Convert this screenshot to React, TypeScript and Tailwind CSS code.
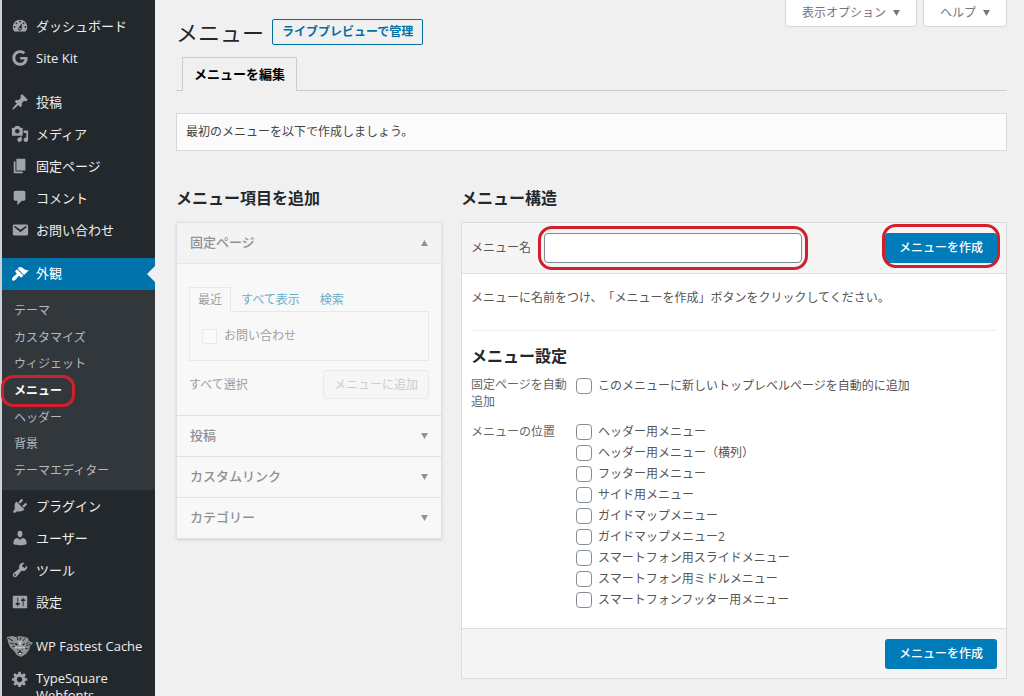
import type { ReactNode } from 'react';
import { FaGoogle } from 'react-icons/fa';

const paths = {
  dashboard:
    'M3.76 16h12.48c1.1-1.37 1.76-3.11 1.76-5 0-4.42-3.58-8-8-8s-8 3.58-8 8c0 1.89.66 3.63 1.76 5zM10 4c.55 0 1 .45 1 1s-.45 1-1 1-1-.45-1-1 .45-1 1-1zM6 6c.55 0 1 .45 1 1s-.45 1-1 1-1-.45-1-1 .45-1 1-1zm8 0c.55 0 1 .45 1 1s-.45 1-1 1-1-.45-1-1 .45-1 1-1zm-5.37 5.55L12 7v6c0 1.1-.9 2-2 2s-2-.9-2-2c0-.57.24-1.08.63-1.45zM4 10c.55 0 1 .45 1 1s-.45 1-1 1-1-.45-1-1 .45-1 1-1zm12 0c.55 0 1 .45 1 1s-.45 1-1 1-1-.45-1-1 .45-1 1-1zm-5 3c0-.55-.45-1-1-1s-1 .45-1 1 .45 1 1 1 1-.45 1-1z',
  post: 'M10.44 3.02l1.82-1.82 6.36 6.35-1.83 1.82c-1.05-.68-2.48-.57-3.41.36l-.75.75c-.92.93-1.04 2.35-.35 3.41l-1.83 1.82-2.41-2.41-2.8 2.79c-.42.42-3.38 2.71-3.8 2.29s1.86-3.39 2.28-3.81l2.79-2.79L4.1 9.36l1.83-1.82c1.05.69 2.48.57 3.4-.36l.75-.75c.93-.92 1.05-2.35.36-3.41z',
  media:
    'M13 11V4c0-.55-.45-1-1-1h-1.67L9 1H5L3.67 3H2c-.55 0-1 .45-1 1v7c0 .55.45 1 1 1h10c.55 0 1-.45 1-1zM7 4.5c1.38 0 2.5 1.12 2.5 2.5S8.38 9.5 7 9.5 4.5 8.38 4.5 7 5.62 4.5 7 4.5zM14 6h5v10.5c0 1.38-1.12 2.5-2.5 2.5S14 17.88 14 16.5s1.12-2.5 2.5-2.5c.17 0 .34.02.5.05V9h-3V6zm-4 8.05V13h2v3.5c0 1.38-1.12 2.5-2.5 2.5S7 17.88 7 16.5 8.12 14 9.5 14c.17 0 .34.02.5.05z',
  page: 'M6 15V2h10v13H6zm-1 1h8v2H3V5h2v11z',
  comments:
    'M5 2h9c1.1 0 2 .9 2 2v7c0 1.1-.9 2-2 2h-2l-5 5v-5H5c-1.1 0-2-.9-2-2V4c0-1.1.9-2 2-2z',
  email:
    'M3.87 4h13.25C18.37 4 19 4.59 19 5.79v8.42c0 1.19-.63 1.79-1.88 1.79H3.87c-1.25 0-1.88-.6-1.88-1.79V5.79c0-1.2.63-1.79 1.88-1.79zm6.62 8.6l6.74-5.53c.24-.2.43-.66.13-1.07-.29-.41-.82-.42-1.17-.17l-5.7 3.86L4.8 5.83c-.35-.25-.88-.24-1.17.17-.3.41-.11.87.13 1.07z',
  appearance:
    'M14.48 11.06L7.41 3.99l1.5-1.5c.5-.56 2.3-.47 3.51.32 1.21.8 1.43 1.28 2.91 2.1 1.18.64 2.45 1.26 4.45.85zm-.71.71L6.7 4.7 4.93 6.47c-.39.39-.39 1.02 0 1.41l1.06 1.06c.39.39.39 1.03 0 1.42-.6.6-1.43 1.11-2.21 1.69-.35.26-.7.53-1.01.84C1.43 14.23.4 16.08 1.4 17.07c.99 1 2.84-.03 4.18-1.36.31-.31.58-.66.85-1.02.57-.78 1.08-1.61 1.69-2.21.39-.39 1.02-.39 1.41 0l1.06 1.06c.39.39 1.02.39 1.41 0z',
  plugins:
    'M13.11 4.36L9.87 7.6 8 5.73l3.24-3.24c.35-.34 1.05-.2 1.56.32.52.51.66 1.21.31 1.55zm-8 1.77l.91-1.12 9.01 9.01-1.19.84c-.71.71-2.63 1.16-3.82 1.16H6.14L4.9 17.26c-.59.59-1.54.59-2.12 0-.59-.58-.59-1.53 0-2.12l1.24-1.24v-3.88c0-1.13.4-3.19 1.09-3.89zm7.26 3.97l3.24-3.24c.34-.35 1.04-.21 1.55.31.52.51.66 1.21.31 1.55l-3.24 3.25z',
  users:
    'M10 9.25c-2.27 0-2.73-3.44-2.73-3.44C7 4.02 7.82 2 9.97 2c2.16 0 2.98 2.02 2.71 3.81 0 0-.41 3.44-2.68 3.44zm0 2.57L12.72 10c2.39 0 4.52 2.33 4.52 4.53v2.49s-3.65 1.13-7.24 1.13c-3.65 0-7.24-1.13-7.24-1.13v-2.49c0-2.25 1.94-4.48 4.47-4.48z',
  tools:
    'M16.68 9.77c-1.34 1.34-3.3 1.67-4.95.99l-5.41 6.52c-.99.99-2.59.99-3.58 0s-.99-2.59 0-3.57l6.52-5.42c-.68-1.65-.35-3.61.99-4.95 1.28-1.28 3.12-1.62 4.72-1.06l-2.89 2.89 2.82 2.82 2.86-2.87c.53 1.58.18 3.39-1.08 4.65zM3.81 16.21c.4.39 1.04.39 1.43 0 .4-.4.4-1.04 0-1.43-.39-.4-1.03-.4-1.43 0-.39.39-.39 1.03 0 1.43z',
  settings:
    'M18 16V4c0-.55-.45-1-1-1H3c-.55 0-1 .45-1 1v12c0 .55.45 1 1 1h14c.55 0 1-.45 1-1zM8 11h1c.55 0 1 .45 1 1s-.45 1-1 1H8v1.5c0 .28-.22.5-.5.5s-.5-.22-.5-.5V13H6c-.55 0-1-.45-1-1s.45-1 1-1h1V5.5c0-.28.22-.5.5-.5s.5.22.5.5V11zm5-2h-1c-.55 0-1-.45-1-1s.45-1 1-1h1V5.5c0-.28.22-.5.5-.5s.5.22.5.5V7h1c.55 0 1 .45 1 1s-.45 1-1 1h-1v5.5c0 .28-.22.5-.5.5s-.5-.22-.5-.5V9z',
  generic:
    'M18 12h-2.18c-.17.7-.44 1.35-.81 1.93l1.54 1.54-2.1 2.1-1.54-1.54c-.58.36-1.23.63-1.91.79V19H8v-2.18c-.68-.16-1.33-.43-1.91-.79l-1.54 1.54-2.12-2.12 1.54-1.54c-.36-.58-.63-1.23-.79-1.91H1V9.03h2.17c.16-.7.44-1.35.8-1.94L2.43 5.55l2.1-2.1 1.54 1.54c.58-.37 1.24-.64 1.93-.81V2h3v2.18c.68.16 1.33.43 1.91.79l1.54-1.54 2.12 2.12-1.54 1.54c.36.59.64 1.24.8 1.94H18V12zm-8.5 1.5c1.66 0 3-1.34 3-3s-1.34-3-3-3-3 1.34-3 3 1.34 3 3 3z',
};

function Icon({ name }: { name: keyof typeof paths }) {
  return (
    <svg viewBox="0 0 20 20" className="size-[18px] fill-current" aria-hidden="true">
      <path d={paths[name]} />
    </svg>
  );
}

function TigerIcon() {
  return (
    <svg viewBox="0 0 26 22" className="h-[22px] w-[26px] shrink-0" aria-hidden="true">
      <path d="M0 2l5-1 4 1 4-1 5 1 3 1 1 3 4 2-3 3-1 4-3 4-5 3-4-2-3-4-4-4-2-5z" fill="#8f9295" />
      <path
        d="M1 3l5 3M3 8l4 1M5 12l3-1M10 2l1 3M14 2l-1 3M18 3l-2 3M22 7l-3 2M24 9l-5 2M21 14l-3-1"
        stroke="#2b3035"
        strokeWidth="1"
        fill="none"
      />
      <path d="M8 8l3 1-1 1.5-2-1zM15 9.500l3-1.500-1 2.500z" fill="#1d2125" />
      <path d="M11.500 6l1.500 4 1.500-4M8 13l2.500-1M18 13l-2.500-1M11 12l2 1 2-1" stroke="#d2d4d6" fill="none" />
      <path d="M10 14.500c2 1 4 1 6-.5l-.5 4-2.500 1.500-2.500-1.500z" fill="#33383c" />
      <path d="M11 15.500v1.500M15 15v2M12 18.500h2" stroke="#e4e5e6" fill="none" />
    </svg>
  );
}

function NavItem({ icon, children }: { icon: ReactNode; children: ReactNode }) {
  return (
    <li>
      <a href="#" className="flex h-8 items-center gap-[7px] pl-[9px] text-[13px] text-[#eeeeee]">
        <span className="flex w-[18px] shrink-0 justify-center text-[#a0a5aa]">{icon}</span>
        <span className="whitespace-nowrap pt-[2px]">{children}</span>
      </a>
    </li>
  );
}

const submenu = ['テーマ', 'カスタマイズ', 'ウィジェット', 'メニュー', 'ヘッダー', '背景', 'テーマエディター'];

const locations = [
  'ヘッダー用メニュー',
  'ヘッダー用メニュー（横列）',
  'フッター用メニュー',
  'サイド用メニュー',
  'ガイドマップメニュー',
  'ガイドマップメニュー2',
  'スマートフォン用スライドメニュー',
  'スマートフォン用ミドルメニュー',
  'スマートフォンフッター用メニュー',
];

function Sidebar() {
  return (
    <nav className="w-[155px] shrink-0 border-l-2 border-[#cdd1d5] bg-[#23282d]">
      <ul className="pt-[10px]">
        <NavItem icon={<Icon name="dashboard" />}>ダッシュボード</NavItem>
        <NavItem icon={<FaGoogle className="size-4" />}>Site Kit</NavItem>
      </ul>
      <ul className="pt-3">
        <NavItem icon={<Icon name="post" />}>投稿</NavItem>
        <NavItem icon={<Icon name="media" />}>メディア</NavItem>
        <NavItem icon={<Icon name="page" />}>固定ページ</NavItem>
        <NavItem icon={<Icon name="comments" />}>コメント</NavItem>
        <NavItem icon={<Icon name="email" />}>お問い合わせ</NavItem>
      </ul>
      <ul className="pt-3">
        <li>
          <a
            href="#"
            className="relative flex h-8 items-center gap-[7px] bg-[#0073aa] pl-[9px] text-[13px] text-white"
          >
            <Icon name="appearance" />
            外観
            <span className="absolute right-0 top-2 border-y-8 border-r-8 border-y-transparent border-r-[#f0f0f0]" />
          </a>
          <ul className="grid h-[200px] grid-rows-7 bg-[#32373c] pb-[6px] pl-3 pt-2 text-[12px]">
            {submenu.map((label) => (
              <li key={label} className="flex items-center">
                {label === 'メニュー' ? (
                  <a href="#" className="relative font-semibold text-white">
                    {label}
                    <span className="absolute -inset-x-[13px] -inset-y-[7px] rounded-[12px] border-[3px] border-[#d31f2b]" />
                  </a>
                ) : (
                  <a href="#" className="text-[#b4b9be]">
                    {label}
                  </a>
                )}
              </li>
            ))}
          </ul>
        </li>
        <NavItem icon={<Icon name="plugins" />}>プラグイン</NavItem>
        <NavItem icon={<Icon name="users" />}>ユーザー</NavItem>
        <NavItem icon={<Icon name="tools" />}>ツール</NavItem>
        <NavItem icon={<Icon name="settings" />}>設定</NavItem>
      </ul>
      <ul className="pt-3">
        <NavItem icon={<TigerIcon />}>WP Fastest Cache</NavItem>
        <li>
          <a href="#" className="flex gap-[7px] pl-[9px] pt-2 text-[13px] leading-[17px] text-[#eeeeee]">
            <span className="shrink-0 text-[#a0a5aa]">
              <Icon name="generic" />
            </span>
            <span>
              TypeSquare
              <br />
              Webfonts
            </span>
          </a>
        </li>
      </ul>
    </nav>
  );
}

function Arrow({ up = false }: { up?: boolean }) {
  return (
    <svg viewBox="0 0 8 7" className="h-[6px] w-[7px] fill-current" aria-hidden="true">
      <path d={up ? 'M0 7h8L4 0z' : 'M0 0h8L4 7z'} />
    </svg>
  );
}

function PrimaryButton() {
  return (
    <button
      type="button"
      className="block h-[30px] rounded-[3px] bg-[#007cba] px-[14px] text-[12px] font-medium text-white"
    >
      メニューを作成
    </button>
  );
}

function Check({ id, label }: { id: string; label: string }) {
  return (
    <div className="flex h-[21px] items-center gap-[6px]">
      <input
        id={id}
        type="checkbox"
        className="size-4 shrink-0 appearance-none rounded-[4px] border border-[#868e96] bg-white"
      />
      <label htmlFor={id}>{label}</label>
    </div>
  );
}

function ItemsBox() {
  return (
    <div className="border border-[#dfe1e3] bg-[#f8f8f8] text-[12px] text-[#a0a0a0] shadow-sm">
      <button
        type="button"
        className="flex h-[41px] w-full items-center justify-between border-b border-[#e6e6e6] bg-[#f3f3f3] px-[13px] text-[13px] font-medium text-[#8f9193]"
      >
        固定ページ
        <Arrow up />
      </button>
      <div className="h-[151px] px-3 pt-[23px]">
        <div className="flex h-6">
          <button type="button" className="-mb-px h-[25px] border border-b-0 border-[#e8e8e8] bg-[#f8f8f8] px-2">
            最近
          </button>
          <a href="#" className="px-[10px] pt-1 text-[#67aecb]">
            すべて表示
          </a>
          <a href="#" className="px-[10px] pt-1 text-[#67aecb]">
            検索
          </a>
        </div>
        <div className="flex h-[50px] items-center gap-[7px] border border-[#e8e8e8] px-3">
          <input
            id="contact"
            type="checkbox"
            disabled
            className="size-[15px] appearance-none rounded-[2px] border border-[#e9e9e9] bg-[#fafafa]"
          />
          <label htmlFor="contact">お問い合わせ</label>
        </div>
        <div className="mt-[9px] flex items-center justify-between">
          <a href="#">すべて選択</a>
          <button
            type="button"
            disabled
            className="h-[29px] rounded-[3px] border border-[#e9e9e9] bg-[#f6f6f6] px-[10px] text-[#cbcdcf]"
          >
            メニューに追加
          </button>
        </div>
      </div>
      {['投稿', 'カスタムリンク', 'カテゴリー'].map((title) => (
        <button
          key={title}
          type="button"
          className="flex h-[41px] w-full items-center justify-between border-t border-[#e1e1e1] px-[13px] text-[13px] font-medium text-[#8f9193]"
        >
          {title}
          <Arrow />
        </button>
      ))}
    </div>
  );
}

function StructureBox() {
  return (
    <div className="border border-[#d9dbdd] bg-white text-[12px] text-[#555555]">
      <div className="flex h-[51px] items-center justify-between border-b border-[#dddddd] bg-[#f5f5f5] px-[9px]">
        <div className="flex items-center gap-[13px]">
          <label htmlFor="menu-name">メニュー名</label>
          <div className="relative">
            <input
              id="menu-name"
              type="text"
              className="block h-[30px] w-[258px] rounded-[4px] border border-[#7e8993] bg-white px-2"
            />
            <span className="pointer-events-none absolute -inset-x-[6px] -inset-y-[7px] rounded-[14px] border-[3px] border-[#d31f2b]" />
          </div>
        </div>
        <div className="relative">
          <PrimaryButton />
          <span className="pointer-events-none absolute -inset-x-[3px] -bottom-[5px] -top-[9px] rounded-[14px] border-[3px] border-[#d31f2b]" />
        </div>
      </div>
      <div className="h-[354px] px-[9px]">
        <p className="flex h-[57px] items-center border-b border-[#eeeeee] pb-2">
          メニューに名前をつけ、「メニューを作成」ボタンをクリックしてください。
        </p>
        <h3 className="pt-[13px] text-[16px] font-bold leading-6 text-[#23282d]">メニュー設定</h3>
        <div className="mt-[7px] flex">
          <p className="w-[105px] shrink-0 pt-px leading-[17px] text-[#666666]">
            固定ページを自動
            <br />
            追加
          </p>
          <Check id="auto-add" label="このメニューに新しいトップレベルページを自動的に追加" />
        </div>
        <div className="mt-[11px] flex">
          <p className="w-[105px] shrink-0 leading-[21px] text-[#666666]">メニューの位置</p>
          <div>
            {locations.map((label, i) => (
              <Check key={label} id={`location-${i}`} label={label} />
            ))}
          </div>
        </div>
      </div>
      <div className="flex h-[50px] items-center justify-end border-t border-[#dddddd] bg-[#f5f5f5] px-[9px]">
        <PrimaryButton />
      </div>
    </div>
  );
}

export default function App() {
  return (
    <div className="flex h-screen overflow-hidden bg-[#f0f0f0] font-['Open_Sans','Noto_Sans_CJK_JP',sans-serif] text-[#444444] [text-spacing-trim:space-all]">
      <Sidebar />
      <main className="min-w-0 flex-1 pl-[21px] pr-[17px]">
        <div className="flex items-start justify-between">
          <div className="flex items-center gap-2 pt-[14px]">
            <h1 className="text-[22px] leading-9 text-[#23282d]">メニュー</h1>
            <a
              href="#"
              className="flex h-[26px] items-center rounded-[2px] border border-[#0071a1] px-[9px] text-[12px] font-bold text-[#0071a1]"
            >
              ライブプレビューで管理
            </a>
          </div>
          <div className="flex gap-[6px] text-[12px] text-[#72777c]">
            {['表示オプション', 'ヘルプ'].map((label) => (
              <button
                key={label}
                type="button"
                className="flex h-[27px] items-center gap-[7px] rounded-b-[4px] border border-t-0 border-[#d5d8db] bg-white px-4"
              >
                {label}
                <Arrow />
              </button>
            ))}
          </div>
        </div>
        <div className="mt-[7px] flex border-b border-[#cccccc] pl-[6px]">
          <a
            href="#"
            className="-mb-px flex h-[34px] items-center border border-b-0 border-[#cccccc] bg-[#f0f0f0] px-[11px] text-[13px] font-bold text-black"
          >
            メニューを編集
          </a>
        </div>
        <p className="mt-[22px] flex h-[38px] items-center border border-[#d7d9db] bg-[#fbfbfb] px-[9px] text-[12px]">
          最初のメニューを以下で作成しましょう。
        </p>
        <div className="mt-[35px] flex items-start gap-[19px]">
          <section className="w-[266px] shrink-0">
            <h2 className="mb-3 text-[16px] font-bold leading-6 text-[#23282d]">メニュー項目を追加</h2>
            <ItemsBox />
          </section>
          <section className="min-w-0 flex-1">
            <h2 className="mb-3 text-[16px] font-bold leading-6 text-[#23282d]">メニュー構造</h2>
            <StructureBox />
          </section>
        </div>
      </main>
    </div>
  );
}
